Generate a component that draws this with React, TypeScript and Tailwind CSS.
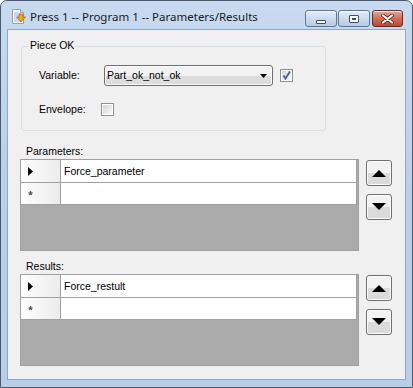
import React from 'react';

const SANS = 'font-["Liberation_Sans",Arial,sans-serif]';

function AppIcon() {
  return (
    <svg width="17" height="17" viewBox="0 0 17 17">
      <path d="M2.5 1.5h8l3 3v11h-11z" fill="#fbfdff" stroke="#8aa1bc" />
      <path d="M4 5h6M4 7h7M4 9h5M4 11h7M4 13h6" stroke="#9cb7d8" strokeWidth="1" />
      <path d="M10.5 1.5v3h3" fill="#e2ebf5" stroke="#8aa1bc" />
      <path d="M9 6h4v3h2.5l-4.5 5-4.5-5H9z" fill="#f3a51e" stroke="#b86a0a" strokeWidth="0.8" />
    </svg>
  );
}

function CaptionButton({ kind }: { kind: 'min' | 'max' | 'close' }) {
  const base =
    'flex items-center justify-center h-[17px] border rounded-[3px] shadow-[inset_0_1px_0_rgba(255,255,255,0.7)]';
  if (kind === 'close') {
    return (
      <div className={`${base} w-[31px] border-[#6d2a22] bg-gradient-to-b from-[#e3a597] via-[#cf6f5a] to-[#c2442c]`}>
        <svg width="13" height="10" viewBox="0 0 13 10">
          <path d="M2 1.5l9 7M11 1.5l-9 7" stroke="#5a2418" strokeWidth="3.6" strokeLinecap="round" />
          <path d="M2 1.5l9 7M11 1.5l-9 7" stroke="#fff" strokeWidth="2.2" strokeLinecap="round" />
        </svg>
      </div>
    );
  }
  return (
    <div className={`${base} w-[32px] border-[#5f7896] bg-gradient-to-b from-[#e3edf8] via-[#cbdbee] to-[#b6cbe6]`}>
      {kind === 'min' ? (
        <div className="w-[10px] h-[4px] mt-[6px] border border-[#3d4f66] bg-white rounded-[1px]" />
      ) : (
        <div className="w-[10px] h-[8px] border border-[#3d4f66] bg-white flex items-center justify-center rounded-[1px]">
          <div className="w-[4px] h-[2px] border border-[#3d4f66]" />
        </div>
      )}
    </div>
  );
}

function Checkbox({ checked }: { checked?: boolean }) {
  return (
    <div className="w-[13px] h-[13px] border border-[#8e8f8f] bg-white p-[1px] shrink-0">
      <div className="w-full h-full bg-gradient-to-br from-[#d4d7dc] to-[#f8f8f8] relative">
        {checked && (
          <svg className="absolute -left-[1px] -top-[1px]" width="11" height="11" viewBox="0 0 11 11">
            <path d="M2.5 5.5l2 3 4.5-7" stroke="#4a5f97" strokeWidth="1.8" fill="none" />
          </svg>
        )}
      </div>
    </div>
  );
}

function ArrowButton({ dir }: { dir: 'up' | 'down' }) {
  return (
    <div className="w-[26px] h-[26px] border border-[#707070] rounded-[3px] bg-gradient-to-b from-[#f2f2f2] from-50% to-[#dbdbdb] to-50% flex items-center justify-center shadow-[inset_0_0_0_1px_#fcfcfc]">
      <svg width="14" height="8" viewBox="0 0 14 8">
        {dir === 'up' ? <path d="M0 8L7 1l7 7z" fill="#000" /> : <path d="M0 0h14L7 7z" fill="#000" />}
      </svg>
    </div>
  );
}

function DataGrid({ value }: { value: string }) {
  const header =
    'w-[40px] shrink-0 border-r border-b border-[#a0a0a0] bg-gradient-to-r from-[#fdfdfd] via-[#f5f5f5] to-[#ebebeb] flex items-center pl-[7px]';
  return (
    <div className="w-[339px] h-[92px] border border-[#a0a0a0] bg-[#ababab]">
      <div className="flex h-[23px]">
        <div className={header}>
          <svg width="5" height="9" viewBox="0 0 5 9">
            <path d="M0 0l5 4.5L0 9z" fill="#000" />
          </svg>
        </div>
        <div className={`w-[296px] border-r border-b border-[#a0a0a0] bg-white flex items-center pl-[3px] pt-[1px] text-[10.5px] text-black ${SANS}`}>
          {value}
        </div>
      </div>
      <div className="flex h-[22px]">
        <div className={`${header} pt-[2px]`}>
          <span className="text-[9px] leading-none text-[#404040] font-bold">*</span>
        </div>
        <div className="w-[296px] border-r border-b border-[#a0a0a0] bg-white" />
      </div>
    </div>
  );
}

function GridSection({ label, value }: { label: string; value: string }) {
  return (
    <div>
      <div className={`ml-[18px] pt-[1px] h-[14px] leading-[13px] text-[10.5px] text-black ${SANS}`}>{label}</div>
      <div className="flex mt-[1px] ml-[12px]">
        <DataGrid value={value} />
        <div className="ml-[7px] mt-[1px] flex flex-col gap-[8px]">
          <ArrowButton dir="up" />
          <ArrowButton dir="down" />
        </div>
      </div>
    </div>
  );
}

export default function App() {
  return (
    <div className="w-[413px] h-[388px] border border-[#4c5a6b] rounded-t-[7px] bg-gradient-to-b from-[#c7daef] via-[#b9d0ea] to-[#b7cfe9] flex flex-col overflow-hidden">
      {/* Title bar */}
      <div className="h-[28px] flex items-start shrink-0">
        <div className="ml-[9px] mt-[7px]">
          <AppIcon />
        </div>
        <div className={`ml-[3px] mt-[8px] text-[11.5px] leading-[15px] text-[#1b1b1b] font-["Noto_Sans","Open_Sans",sans-serif]`}>
          Press 1 -- Program 1 -- Parameters/Results
        </div>
        <div className="ml-auto mr-[9px] mt-[9px] flex gap-[1px]">
          <CaptionButton kind="min" />
          <CaptionButton kind="max" />
          <div className="ml-[1px]">
            <CaptionButton kind="close" />
          </div>
        </div>
      </div>

      {/* Client area */}
      <div className="ml-[6px] w-[399px] h-[351px] border border-[#8fa8c6] bg-[#f0f0f0]">
        {/* Piece OK group */}
        <div className="relative mt-[16px] ml-[13px] w-[305px] h-[85px] border border-[#d5dfe5] rounded-[3px]">
          <div className={`absolute -top-[8px] left-[7px] px-[1px] bg-[#f0f0f0] text-[10.5px] leading-[13px] text-black ${SANS}`}>
            Piece OK
          </div>
          <div className="pt-[18px] pl-[17px] flex items-center">
            <div className={`w-[65px] text-[10.5px] text-black ${SANS}`}>Variable:</div>
            <div className="w-[169px] h-[21px] border border-[#707070] rounded-[3px] bg-gradient-to-b from-[#f2f2f2] from-50% to-[#dddddd] to-50% flex items-center pl-[2px] pr-[5px] shadow-[inset_0_0_0_1px_#fafafa]">
              <span className={`text-[10.5px] text-black ${SANS}`}>Part_ok_not_ok</span>
              <svg className="ml-auto" width="7" height="4" viewBox="0 0 7 4">
                <path d="M0 0h7L3.5 4z" fill="#000" />
              </svg>
            </div>
            <div className="ml-[7px]">
              <Checkbox checked />
            </div>
          </div>
          <div className="mt-[17px] pl-[17px] flex items-center h-[13px]">
            <div className={`w-[62px] text-[10.5px] text-black ${SANS}`}>Envelope:</div>
            <Checkbox />
          </div>
        </div>

        <div className="mt-[13px]">
          <GridSection label="Parameters:" value="Force_parameter" />
        </div>
        <div className="mt-[8px]">
          <GridSection label="Results:" value="Force_restult" />
        </div>
      </div>
    </div>
  );
}
